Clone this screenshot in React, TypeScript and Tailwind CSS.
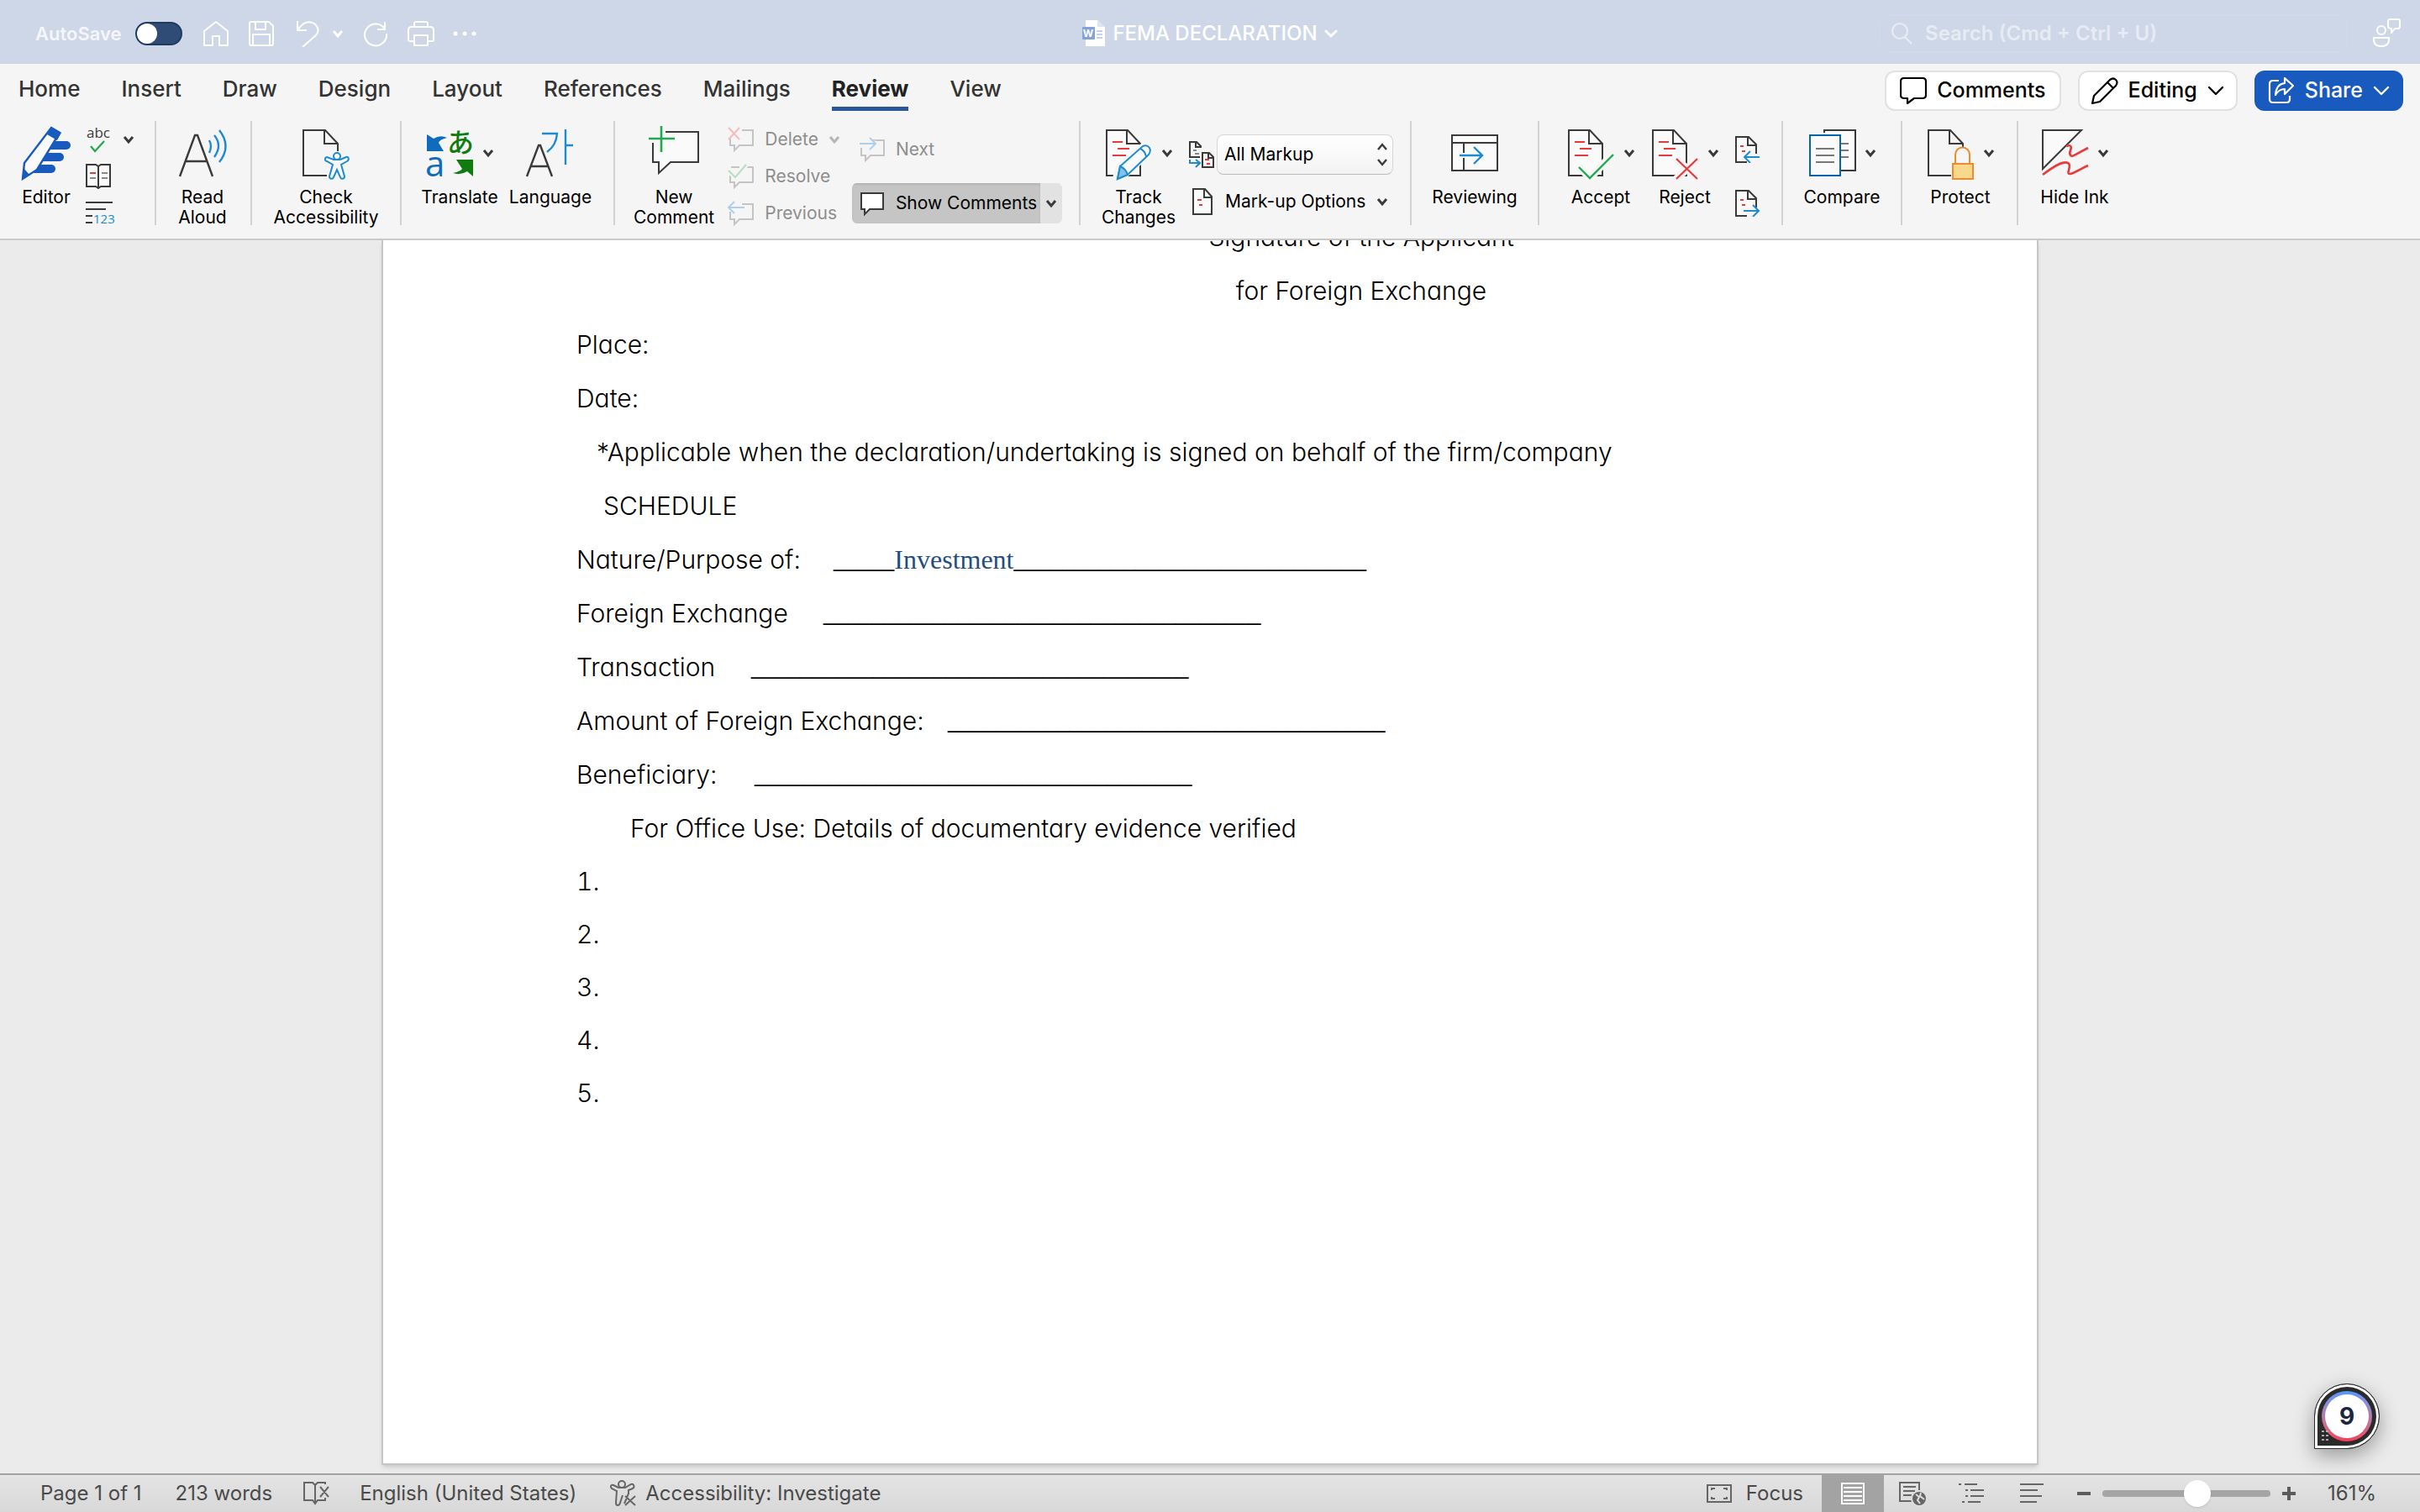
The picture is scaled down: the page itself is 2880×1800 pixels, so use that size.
import { useState } from 'react';
import type { ReactNode } from 'react';

const INK = '#3b3a39';
const RED = '#e8393c';
const BLUE = '#1e8bd0';
const GREEN = '#21a94f';

function Chevron({ className = '' }: { className?: string }) {
  return (
    <svg className={`h-3 w-3.5 shrink-0 ${className}`} viewBox="0 0 14 12" fill="none" stroke="currentColor" strokeWidth="3">
      <path d="M2 3l5 6 5-6" />
    </svg>
  );
}

function ThinChevron() {
  return (
    <svg className="h-4 w-5 shrink-0" viewBox="0 0 20 16" fill="none" stroke="currentColor" strokeWidth="2.4" strokeLinecap="round" strokeLinejoin="round">
      <path d="M2 4l8 8 8-8" />
    </svg>
  );
}

/* ---------- large ribbon icons, drawn on a 60 x 64 grid ---------- */

function BigIcon({ children }: { children: ReactNode }) {
  return (
    <svg className="h-16 w-15 shrink-0 overflow-visible" viewBox="0 0 60 64" fill="none" stroke={INK} strokeWidth="2">
      {children}
    </svg>
  );
}

function EditorIcon() {
  return (
    <BigIcon>
      <g fill="#185abd" stroke="none">
        <path d="M36 18h18a5 5 0 0 1 0 10H30z" />
        <path d="M28 32h18a5 5 0 0 1 0 10H22z" />
        <path d="M20 46h16a5 5 0 0 1 0 10H12z" />
      </g>
      <path d="M36 2l10 6-27 44-17 11 2-19z" fill="#fafafa" stroke="#185abd" strokeWidth="2.4" />
      <path d="M36 1l12 7-5 9-12-7z" fill="#185abd" stroke="none" />
      <path d="M1 63l2-13 7 8z" fill="#185abd" stroke="none" />
    </BigIcon>
  );
}

function ReadAloudIcon() {
  return (
    <BigIcon>
      <path d="M3 60L21 11h3l18 49M9 42h27" strokeWidth="2.4" />
      <g stroke={BLUE} strokeWidth="2.4">
        <path d="M38 17q4 7 0 15" />
        <path d="M44 11q10 12 0 26" />
        <path d="M50 5q15 19 0 38" />
      </g>
    </BigIcon>
  );
}

function AccessibilityIcon() {
  return (
    <BigIcon>
      <path d="M31 59H3V5h26l15 16v9M28 5v16h16" />
      <g stroke={BLUE}>
        <circle cx="43" cy="36" r="4" fill="#fafafa" />
        <path
          d="M31 37c-3 1-3 4 0 5l7 4-4 14c0 3 4 4 5 1l4-9 4 9c1 3 5 2 5-1l-4-14 7-4c3-2 2-6-1-5l-7 3h-8z"
          fill="#fafafa"
        />
      </g>
    </BigIcon>
  );
}

function TranslateIcon() {
  return (
    <BigIcon>
      <path d="M2 10l8 5q8-5 16-1-9 2-10 6l6 10H2z" fill="#0f6cbd" stroke="none" />
      <path d="M57 60l-7-6q-8 5-17 2 9-2 11-5l-7-11h20z" fill="#107c10" stroke="none" />
      <text x="0" y="60" fill="#0f6cbd" stroke="none" className="font-['Open_Sans',sans-serif] text-[42px]">a</text>
      <text x="26" y="31" fill="#107c10" stroke="none" className="font-['Noto_Sans_CJK_JP',sans-serif] text-[32px] font-medium">あ</text>
    </BigIcon>
  );
}

function LanguageIcon() {
  return (
    <BigIcon>
      <path d="M2 60l14-37h2l14 37M7 48h20" strokeWidth="2.4" />
      <g stroke={BLUE} strokeWidth="2.4">
        <path d="M20 9h18q-1 14-12 22M48 4v42M48 23h9" />
      </g>
    </BigIcon>
  );
}

function NewCommentIcon() {
  return (
    <BigIcon>
      <path d="M20 7h39v36H26L12 56V43H5V20" fill="#fafafa" />
      <path d="M15 0v31M0 15h31" stroke="#f5f5f5" strokeWidth="8" />
      <path d="M15 0v31M0 15h31" stroke={GREEN} strokeWidth="2.6" />
    </BigIcon>
  );
}

// page outline with tracked lines; the child is drawn over its lower right
function RedlinePage({ children }: { children: ReactNode }) {
  return (
    <BigIcon>
      <path d="M3 59V5h25l15 16v38z" fill="#fafafa" />
      <path d="M27 5v16h16" />
      <path d="M10 19h12M16 27h14M10 35h16" stroke={RED} />
      {children}
    </BigIcon>
  );
}

function TrackIcon() {
  return (
    <RedlinePage>
      <path d="M13 62l4-14 28-24q5-3 9 2 2 4-1 8L26 58z" fill="#f5f5f5" stroke="#f5f5f5" strokeWidth="6" />
      <path d="M16 63l3-15 27-24q5-2 8 2 2 4-1 8L28 58z" fill="#fafafa" stroke={BLUE} />
      <path d="M16 63l3-15q7 3 9 10z" fill="#83c0ea" stroke={BLUE} />
      <path d="M43 27q5 2 7 9" stroke={BLUE} />
    </RedlinePage>
  );
}

function AcceptIcon() {
  return (
    <RedlinePage>
      <path d="M15 48l13 14 28-29" stroke="#f5f5f5" strokeWidth="9" />
      <path d="M15 49l13 13 28-28" stroke={GREEN} strokeWidth="2.4" />
    </RedlinePage>
  );
}

function RejectIcon() {
  return (
    <RedlinePage>
      <path d="M31 39l25 24M56 39L31 63" stroke="#f5f5f5" strokeWidth="9" />
      <path d="M31 39l25 24M56 39L31 63" stroke={RED} strokeWidth="2.2" />
    </RedlinePage>
  );
}

function ReviewingIcon() {
  return (
    <BigIcon>
      <path d="M3 11h54v42H3z" fill="#fafafa" />
      <path d="M3 20h54M17 20v12M17 38v15" />
      <path d="M12 35h26M29 25l10 10-10 10" stroke={BLUE} strokeWidth="2.4" />
    </BigIcon>
  );
}

function CompareIcon() {
  return (
    <BigIcon>
      <path d="M20 8V5h37v48H40" fill="#fafafa" />
      <path d="M40 21h9M40 29h9M40 37h9" stroke="#777" />
      <path d="M3 11h36v48H3z" fill="#fafafa" stroke="#0563af" />
      <path d="M10 27h22M10 35h22M10 43h22" stroke="#777" />
    </BigIcon>
  );
}

function ProtectIcon() {
  return (
    <BigIcon>
      <path d="M30 59H3V5h26l15 16v4M28 5v16h16" />
      <path d="M35 44V34a8 8 0 0 1 17 0v10" stroke="#f08a2c" />
      <path d="M32 45h24v18H32z" fill="#f8d88b" stroke="#f08a2c" />
    </BigIcon>
  );
}

function HideInkIcon() {
  return (
    <BigIcon>
      <path d="M3 5h46L3 51z" fill="#fafafa" />
      <path d="M31 24c5-2 7 0 5 5s0 9 6 5l15-8M3 58c12-9 24-17 30-14s-4 14 3 13c5-1 12-6 21-10" stroke={RED} strokeWidth="2.6" />
    </BigIcon>
  );
}

/* ---------- small icons, 32 x 32 ---------- */

function SmallIcon({ children, className = '' }: { children: ReactNode; className?: string }) {
  return (
    <svg className={`h-8 w-8 shrink-0 ${className}`} viewBox="0 0 32 32" fill="none" stroke="currentColor" strokeWidth="2">
      {children}
    </svg>
  );
}

function Bubble({ kind }: { kind: 'delete' | 'resolve' | 'previous' | 'next' | 'show' }) {
  if (kind === 'show') {
    return (
      <SmallIcon className="text-[#3b3a39]">
        <path d="M3 4h26v19H13l-6 6v-6H3z" fill="#fff" />
      </SmallIcon>
    );
  }
  return (
    <SmallIcon className="text-[#c4c4c4]">
      <path d="M17 5h13v18H14l-6 6v-6H3V14" />
      {kind === 'delete' && <path d="M1 2l13 14M14 2L1 16" stroke="#f6bcbc" />}
      {kind === 'resolve' && (
        <>
          <path d="M4 5h10" />
          <path d="M1 9l8 8L22 2" stroke="#f5f5f5" strokeWidth="6" />
          <path d="M1 9l8 8L22 2" stroke="#b5dfc3" />
        </>
      )}
      {kind === 'previous' && <path d="M20 9H1M8 2L1 9l7 7" stroke="#aed0ec" />}
      {kind === 'next' && (
        <>
          <path d="M2 9h18" stroke="#f5f5f5" strokeWidth="7" />
          <path d="M1 9h19M13 2l7 7-7 7" stroke="#aed0ec" />
        </>
      )}
    </SmallIcon>
  );
}

function ChangeJumpIcon({ next = false }: { next?: boolean }) {
  return (
    <SmallIcon className="text-[#3b3a39]">
      <path d="M15 31H2V1h15l9 9v11" fill="#fafafa" />
      <path d="M16 1v10h10" />
      <path d="M7 12h4M9 18h4" stroke={RED} />
      <path d="M12 25h20" stroke="#f5f5f5" strokeWidth="8" />
      {next ? <path d="M11 25h18M22 18l7 7-7 7" stroke={BLUE} /> : <path d="M30 25H12M19 18l-7 7 7 7" stroke={BLUE} />}
    </SmallIcon>
  );
}

function Group({ className, children }: { className: string; children: ReactNode }) {
  return <div className={`flex h-31 shrink-0 border-r-2 border-[#d2d2d2] ${className}`}>{children}</div>;
}

function BigButton({ icon, label, menu = false, className = '' }: { icon: ReactNode; label: string; menu?: boolean; className?: string }) {
  return (
    <button type="button" className={`flex shrink-0 flex-col items-center gap-[9px] pt-1.5 text-[21px] leading-6 text-black ${className}`}>
      <span className="flex items-center gap-2">
        {icon}
        {menu && <Chevron className="text-[#3b3a39]" />}
      </span>
      <span className="whitespace-pre-line text-center">{label}</span>
    </button>
  );
}

function TitleBar() {
  const [autoSave, setAutoSave] = useState(false);
  return (
    <header className="flex h-19 items-center bg-[#ced7e8] px-[22px] pt-1 text-white">
      <div className="flex flex-1 items-center">
        <label htmlFor="autosave" className="ml-5 text-[22px] font-semibold text-[#f4f6fa]">AutoSave</label>
        <input
          id="autosave"
          type="checkbox"
          role="switch"
          checked={autoSave}
          onChange={(e) => setAutoSave(e.target.checked)}
          className="ml-4 flex h-7 w-14 appearance-none items-center rounded-full border-2 border-[#203a60] bg-[#2f4c77] before:block before:size-6 before:rounded-full before:bg-white checked:before:ml-7"
        />
        <button type="button" aria-label="Home" className="ml-6">
          <SmallIcon><path d="M2 30V13L16 2l14 11v17H20V19h-8v11z" strokeLinejoin="round" /></SmallIcon>
        </button>
        <button type="button" aria-label="Save" className="ml-[22px]">
          <SmallIcon>
            <path d="M2 4q0-2 2-2h21l5 5v21q0 2-2 2H4q-2 0-2-2zM9 2v9h12V2M6 30V17h20v13" strokeLinejoin="round" />
          </SmallIcon>
        </button>
        <button type="button" aria-label="Undo" className="ml-6">
          <SmallIcon><path d="M3 1v11h11M3 12C9 3 16 0 23 4q8 7 2 14L9 32" /></SmallIcon>
        </button>
        <button type="button" aria-label="Undo list" className="ml-3"><Chevron /></button>
        <button type="button" aria-label="Redo" className="ml-[22px]">
          <SmallIcon><path d="M27 2v9H18M26 9A13 13 0 1 0 29 16" /></SmallIcon>
        </button>
        <button type="button" aria-label="Print" className="ml-[22px]">
          <SmallIcon>
            <path d="M8 25H3q-2 0-2-2V12q0-4 4-4h22q4 0 4 4v11q0 2-2 2h-5M8 8V4q0-2 2-2h12q2 0 2 2v4M8 18h16v12H8z" strokeLinejoin="round" />
          </SmallIcon>
        </button>
        <button type="button" aria-label="More" className="ml-5">
          <SmallIcon><path d="M5 16h.1M16 16h.1M27 16h.1" strokeWidth="5" strokeLinecap="round" /></SmallIcon>
        </button>
      </div>
      <button type="button" className="flex items-center gap-2 text-2xl font-medium">
        <svg className="h-8 w-7 overflow-visible" viewBox="0 0 28 32">
          <path d="M4 0h14l9 8v23H4z" fill="#fff" />
          <path d="M18 0v8h9z" fill="#dfe3ea" />
          <path d="M17 13h7M17 17h7M17 21h7" stroke="#7fa4dc" />
          <rect y="8" width="15" height="15" rx="1" fill="#83a2db" />
          <text x="7" y="20" textAnchor="middle" fill="#fff" className="text-[12px] font-bold">W</text>
        </svg>
        FEMA DECLARATION
        <svg className="h-3 w-4" viewBox="0 0 16 12" fill="none" stroke="currentColor" strokeWidth="3" strokeLinecap="round">
          <path d="M2 3l6 6 6-6" />
        </svg>
      </button>
      <div className="flex flex-1 items-center justify-end gap-7">
        <label htmlFor="search" className="flex h-11 w-[558px] items-center gap-3.5 rounded-xl border border-[#d3dbea] px-3 text-[#e6ebf4]">
          <svg className="size-7" viewBox="0 0 28 28" fill="none" stroke="currentColor" strokeWidth="2.2">
            <circle cx="12" cy="11" r="9" />
            <path d="M18 18l8 8" />
          </svg>
          <input id="search" placeholder="Search (Cmd + Ctrl + U)" className="flex-1 bg-transparent text-2xl font-semibold outline-none placeholder:text-[#e6ebf4]" />
        </label>
        <button type="button" aria-label="Presence">
          <svg className="h-9 w-9" viewBox="0 0 36 36" fill="none" stroke="currentColor" strokeWidth="2" strokeLinejoin="round">
            <circle cx="12" cy="14" r="5" />
            <path d="M3 23h18q1 10-9 10T3 23zM20 3q0-2 2-2h10q2 0 2 2v6q0 3-2 3h-4l-4 5v-5q-4 0-4-3z" />
          </svg>
        </button>
      </div>
    </header>
  );
}

const TABS = ['Home', 'Insert', 'Draw', 'Design', 'Layout', 'References', 'Mailings', 'Review', 'View'];

function TabRow() {
  return (
    <div className="flex h-15 items-center justify-between pl-[22px] pr-5 text-[25px] font-medium">
      <nav className="flex h-full gap-[49px] pt-2 text-[26px] text-[#333]">
        {TABS.map((tab) => (
          <button
            key={tab}
            type="button"
            className={tab === 'Review' ? 'h-12 border-b-5 border-[#2b579a] font-bold text-[#222]' : 'h-12 border-b-5 border-transparent'}
          >
            {tab}
          </button>
        ))}
      </nav>
      <div className="flex gap-5 pt-1 text-black">
        <button type="button" className="flex h-12 items-center gap-3 rounded-xl border-2 border-[#e1e1e1] bg-white px-4">
          <svg className="size-8" viewBox="0 0 32 32" fill="none" stroke="currentColor" strokeWidth="2.2" strokeLinejoin="round">
            <path d="M1 5q0-4 4-4h22q4 0 4 4v16q0 4-4 4H17l-8 6v-6H5q-4 0-4-4z" />
          </svg>
          Comments
        </button>
        <button type="button" className="flex h-12 items-center gap-3 rounded-xl border-2 border-[#e1e1e1] bg-white px-3.5">
          <svg className="size-8" viewBox="0 0 32 32" fill="none" stroke="currentColor" strokeWidth="2.2" strokeLinejoin="round">
            <path d="M1 31l2-9L22 3q4-3 7 0t0 7L10 29zM19 6l7 7" />
          </svg>
          Editing
          <ThinChevron />
        </button>
        <button type="button" className="flex h-12 items-center gap-3 rounded-xl bg-[#185abd] px-4 text-white">
          <svg className="size-8" viewBox="0 0 32 32" fill="none" stroke="currentColor" strokeWidth="2.2" strokeLinejoin="round">
            <path d="M13 4H6Q2 4 2 8v18q0 4 4 4h16q4 0 4-4v-4M20 1l10 9-10 10v-6q-7 0-11 7 1-13 11-14z" />
          </svg>
          Share
          <ThinChevron />
        </button>
      </div>
    </div>
  );
}

function Ribbon() {
  return (
    <div className="flex items-start overflow-hidden border-b-2 border-[#c9c9c9] pt-2 pb-4 text-[21px] leading-6">
      <Group className="w-[186px]">
        <BigButton className="w-[98px] pl-3" icon={<EditorIcon />} label="Editor" />
        <div className="flex flex-col gap-3 pt-1.5">
          <button type="button" aria-label="Spelling and grammar" className="flex items-center gap-3 text-[#3b3a39]">
            <svg className="h-8 w-9 overflow-visible" viewBox="0 0 36 32" fill="none">
              <text x="5" y="14" fill={INK} className="font-['Open_Sans',sans-serif] text-[17px]">abc</text>
              <path d="M10 24l5 6 11-12" stroke={GREEN} strokeWidth="2.2" />
            </svg>
            <Chevron />
          </button>
          <button type="button" aria-label="Thesaurus">
            <svg className="h-8 w-9" viewBox="0 0 36 32" fill="none" stroke={INK} strokeWidth="2">
              <path d="M5 2h11l3 2 3-2h11v26H22l-3 2-3-2H5zM19 4v25" fill="#fafafa" />
              <path d="M9 18h7M23 12h7M23 18h7" stroke="#888" />
              <path d="M9 12h7" stroke={RED} />
            </svg>
          </button>
          <button type="button" aria-label="Word count">
            <svg className="h-8 w-9 overflow-visible" viewBox="0 0 36 32" fill="none" stroke={INK} strokeWidth="2">
              <path d="M4 3h32M4 11h24M4 19h8M4 27h8" />
              <text x="13" y="28" fill={BLUE} stroke="none" className="font-['Open_Sans',sans-serif] text-[15px] font-medium">123</text>
            </svg>
          </button>
        </div>
      </Group>
      <Group className="w-[114px] justify-center pr-0.5">
        <BigButton icon={<ReadAloudIcon />} label={'Read\nAloud'} />
      </Group>
      <Group className="w-[178px] justify-center">
        <BigButton icon={<AccessibilityIcon />} label={'Check\nAccessibility'} />
      </Group>
      <Group className="w-[254px] pl-[22px]">
        <BigButton className="w-[94px]" icon={<TranslateIcon />} label="Translate" menu />
        <BigButton className="ml-2 w-[106px]" icon={<LanguageIcon />} label="Language" />
      </Group>
      <Group className="w-[554px] pl-[22px]">
        <BigButton icon={<NewCommentIcon />} label={'New\nComment'} />
        <div className="flex flex-col gap-3 pt-1.5 pl-4 text-[#8e8e8e]">
          <button type="button" disabled className="flex h-8 items-center gap-3">
            <Bubble kind="delete" />
            Delete
            <Chevron className="text-[#b5b5b5]" />
          </button>
          <button type="button" disabled className="flex h-8 items-center gap-3">
            <Bubble kind="resolve" />
            Resolve
          </button>
          <button type="button" disabled className="flex h-8 items-center gap-3">
            <Bubble kind="previous" />
            Previous
          </button>
        </div>
        <div className="flex flex-col gap-6 pt-[18px] pl-3.5">
          <button type="button" disabled className="flex h-8 items-center gap-3 pl-2 text-[#8e8e8e]">
            <Bubble kind="next" />
            Next
          </button>
          <div className="flex h-12 overflow-hidden rounded-md text-black">
            <button type="button" aria-pressed="true" className="flex items-center gap-3 bg-[#c5c5c5] pr-1 pl-2 shadow-[inset_0_2px_2px_#b4b4b4]">
              <Bubble kind="show" />
              Show Comments
            </button>
            <button type="button" aria-label="Comment display" className="bg-[#e2e2e2] px-1.5 text-[#3b3a39]">
              <Chevron />
            </button>
          </div>
        </div>
      </Group>
      <Group className="w-[394px] pl-6">
        <BigButton className="w-[90px]" icon={<TrackIcon />} label={'Track\nChanges'} menu />
        <div className="flex flex-1 flex-col gap-4 pt-4 pr-5 pl-3.5">
          <div className="flex items-center gap-0.5">
            <SmallIcon className="text-[#3b3a39]">
              <path d="M14 19H2V1h8l5 5v2M9 1v6h6M17 14v17h13V19l-5-5zM24 14v6h6" />
              <path d="M6 11h4M8 15h5" stroke="#888" />
              <path d="M20 22h5M22 27h4" stroke={RED} />
              <path d="M2 22v4h11M9 22l5 4-5 5" stroke={BLUE} />
            </SmallIcon>
            <div className="relative flex-1">
              <select
                aria-label="Display for review"
                className="h-12 w-full appearance-none rounded-lg border border-[#d6d6d6] border-b-[#bdbdbd] bg-linear-to-b from-white to-[#f3f3f3] pl-2 text-black"
              >
                <option>All Markup</option>
              </select>
              <svg className="pointer-events-none absolute top-2.5 right-1.5 h-7 w-3.5" viewBox="0 0 14 28" fill="none" stroke={INK} strokeWidth="2.4">
                <path d="M2 8l5-6 5 6M2 20l5 6 5-6" />
              </svg>
            </div>
          </div>
          <button type="button" className="flex items-center gap-3 text-black">
            <SmallIcon className="text-[#3b3a39]">
              <path d="M6 1h14l8 9v21H6zM19 1v10h9" fill="#fafafa" />
              <path d="M11 14h5M13 20h4" stroke={RED} />
            </SmallIcon>
            <span className="flex-1 text-left">Mark-up Options</span>
            <Chevron className="mr-1.5 text-[#3b3a39]" />
          </button>
        </div>
      </Group>
      <Group className="w-[152px] justify-center">
        <BigButton icon={<ReviewingIcon />} label="Reviewing" />
      </Group>
      <Group className="w-[290px] gap-[18px] pl-8">
        <BigButton icon={<AcceptIcon />} label="Accept" menu />
        <BigButton icon={<RejectIcon />} label="Reject" menu />
        <div className="flex flex-col gap-8 pt-[18px]">
          <button type="button" aria-label="Previous change"><ChangeJumpIcon /></button>
          <button type="button" aria-label="Next change"><ChangeJumpIcon next /></button>
        </div>
      </Group>
      <Group className="w-[142px] justify-center">
        <BigButton icon={<CompareIcon />} label="Compare" menu />
      </Group>
      <Group className="w-[138px] justify-center pl-0.5">
        <BigButton icon={<ProtectIcon />} label="Protect" menu />
      </Group>
      <BigButton className="ml-[26px]" icon={<HideInkIcon />} label="Hide Ink" menu />
    </div>
  );
}

const FIELDS = [
  { label: 'Foreign Exchange', width: 'w-[294px]' },
  { label: 'Transaction', width: 'w-[208px]' },
  { label: 'Amount of Foreign Exchange:', width: 'w-[442px]' },
  { label: 'Beneficiary:', width: 'w-[212px]' },
];

function Blank({ count }: { count: number }) {
  return <span className="font-['Liberation_Sans',sans-serif] text-[26px] font-normal">{'_'.repeat(count)}</span>;
}

function DocumentPage() {
  return (
    <main className="flex flex-1 justify-center overflow-hidden bg-[#ebebeb] pb-2.5">
      <article className="w-[1972px] max-w-full overflow-hidden border-2 border-t-0 border-[#c6c6c6] bg-white pl-[230px] text-[30px] leading-16 font-[350] whitespace-nowrap text-black shadow-md [font-feature-settings:'cv11']">
        <div className="-mt-9 ml-[742px] w-[384px] text-center">
          <p>Signature of the Applicant</p>
          <p>for Foreign Exchange</p>
        </div>
        <p>Place:</p>
        <p>Date:</p>
        <p className="pl-6">*Applicable when the declaration/undertaking is signed on behalf of the firm/company</p>
        <p className="pl-8">SCHEDULE</p>
        <p className="flex">
          <span className="w-[306px]">Nature/Purpose of:</span>
          <Blank count={5} />
          <span className="font-['Liberation_Serif',serif] text-[32px] font-normal text-[#1f4e80]">Investment</span>
          <Blank count={29} />
        </p>
        {FIELDS.map((field) => (
          <p key={field.label} className="flex">
            <span className={field.width}>{field.label}</span>
            <Blank count={36} />
          </p>
        ))}
        <p className="pl-16">For Office Use: Details of documentary evidence verified</p>
        <ol className="list-inside list-decimal leading-[63px]">
          {[1, 2, 3, 4, 5].map((n) => (
            <li key={n} />
          ))}
        </ol>
      </article>
    </main>
  );
}

function StatusBar() {
  const [zoom, setZoom] = useState(58);
  return (
    <footer className="flex h-[46px] items-center justify-between border-t-2 border-[#a3a3a3] bg-linear-to-b from-[#e4e4e4] to-[#d8d8d8] pr-[52px] pl-12 text-2xl text-[#4a4a4a]">
      <div className="flex items-center">
        <span>Page 1 of 1</span>
        <span className="ml-10">213 words</span>
        <button type="button" aria-label="Proofing" className="ml-9">
          <SmallIcon className="text-[#666]">
            <path d="M27 5V3H18l-3 3-3-3H2v21h10l3 4 3-4h9v-3M15 6v20M21 8l10 12M31 8L21 20" />
          </SmallIcon>
        </button>
        <button type="button" className="ml-9">English (United States)</button>
        <button type="button" className="ml-10 flex items-center gap-2.5">
          <SmallIcon className="text-[#666]">
            <circle cx="14" cy="5" r="4" />
            <path d="M17 28l5-12v-4l5-2c3-2 1-6-2-5l-7 4h-8L4 6C1 5 0 8 2 10l6 3-1 14c0 4 4 4 5 0l3-9M18 19l12 11M30 19L18 30" />
          </SmallIcon>
          Accessibility: Investigate
        </button>
      </div>
      <div className="flex h-full items-center">
        <button type="button" className="flex items-center gap-4">
          <SmallIcon className="text-[#666]">
            <path d="M2 6h28v20H2zM7 12V10h4M21 10h4v2M25 20v2h-4M11 22H7v-2" />
          </SmallIcon>
          Focus
        </button>
        <button type="button" aria-label="Print layout" className="ml-[22px] flex h-full w-[74px] items-center justify-center bg-[#a3a3a3] text-white">
          <SmallIcon><path d="M3 4h26v24H3zM5 9h22M5 14h22M5 19h22M5 24h22" /></SmallIcon>
        </button>
        <button type="button" aria-label="Web layout" className="ml-4">
          <svg className="h-8 w-9" viewBox="0 0 36 32" fill="none" stroke="#666" strokeWidth="2">
            <path d="M18 25H3V3h23v9M7 8h15M7 13h14M7 18h10" />
            <circle cx="26" cy="22" r="9" fill="#666" stroke="#dedede" />
            <path d="M22 17l4 3-2 4 3 4M28 15l-1 4 5 4" stroke="#dedede" />
          </svg>
        </button>
        <button type="button" aria-label="Outline" className="ml-9">
          <SmallIcon className="text-[#666]">
            <path d="M1 5h3M8 5h15M9 12h3M15 12h16M9 19h3M15 19h16M5 26h3M12 26h15" />
          </SmallIcon>
        </button>
        <button type="button" aria-label="Draft" className="ml-10">
          <SmallIcon className="text-[#666]">
            <path d="M2 5h28M2 12h21M2 19h26M2 26h20" />
          </SmallIcon>
        </button>
        <button type="button" aria-label="Zoom out" className="ml-9">
          <svg className="h-5 w-5" viewBox="0 0 20 20" stroke="#5c5c5c" strokeWidth="4"><path d="M2 10h16" /></svg>
        </button>
        <input
          type="range"
          aria-label="Zoom"
          value={zoom}
          onChange={(e) => setZoom(Number(e.target.value))}
          className="ml-3 h-2 w-[200px] appearance-none rounded-full bg-[#a5a5a5] [&::-webkit-slider-thumb]:size-8 [&::-webkit-slider-thumb]:appearance-none [&::-webkit-slider-thumb]:rounded-full [&::-webkit-slider-thumb]:bg-white [&::-webkit-slider-thumb]:shadow"
        />
        <button type="button" aria-label="Zoom in" className="ml-3">
          <svg className="h-5 w-5" viewBox="0 0 20 20" stroke="#5c5c5c" strokeWidth="4"><path d="M2 10h16M10 2v16" /></svg>
        </button>
        <span className="ml-9">161%</span>
      </div>
    </footer>
  );
}

function CounterBadge() {
  return (
    <button
      type="button"
      className="absolute right-12 bottom-[75px] flex size-[78px] items-center justify-center rounded-full rounded-bl-none border border-[#2b2b2b] bg-[#2b2b2b] shadow-[0_8px_24px_rgba(0,0,0,0.35)] ring-3 ring-white ring-inset"
    >
      <span className="flex size-15 items-center justify-center rounded-full bg-linear-to-b from-[#4f97fb] to-[#f43b57] p-1">
        <span className="flex size-full items-center justify-center rounded-full bg-white text-[28px] font-bold text-[#1b2440]">9</span>
      </span>
      <svg className="absolute bottom-2 left-2 h-3.5 w-2" viewBox="0 0 8 14" fill="#aaa">
        <path d="M0 1h3v2H0zM5 1h3v2H5zM0 6h3v2H0zM5 6h3v2H5zM0 11h3v2H0zM5 11h3v2H5z" />
      </svg>
    </button>
  );
}

export default function App() {
  return (
    <div className="relative flex h-screen flex-col bg-[#f5f5f5] font-[Inter,'Liberation_Sans',sans-serif]">
      <TitleBar />
      <TabRow />
      <Ribbon />
      <DocumentPage />
      <StatusBar />
      <CounterBadge />
    </div>
  );
}
